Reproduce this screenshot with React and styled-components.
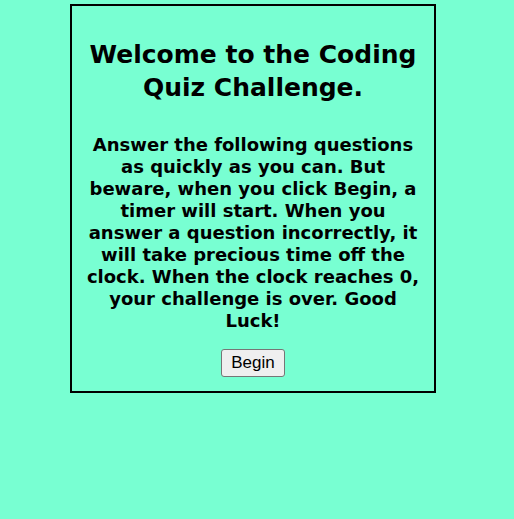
import React from "react";
import styled, { createGlobalStyle } from "styled-components";

const GlobalStyle = createGlobalStyle`
  html, body {
    margin: 0;
    padding: 0;
    background: #78ffd2;
  }
  body {
    font-family: "DejaVu Sans", Verdana, sans-serif;
    color: #000;
  }
`;

const Page = styled.div`
  padding: 4px 0 0 70px;
`;

const QuizBox = styled.section`
  box-sizing: border-box;
  width: 366px;
  border: 2px solid #000;
  padding: 32px 6px 14px;
  text-align: center;
`;

const Title = styled.h1`
  font-size: 25px;
  line-height: 33px;
  font-weight: bold;
  margin: 0 0 30px;
`;

const Intro = styled.p`
  font-size: 18px;
  line-height: 22px;
  font-weight: bold;
  margin: 0 0 17px;
`;

const BeginButton = styled.button`
  font-family: "Liberation Sans", Arial, sans-serif;
  font-size: 17px;
  height: 28px;
  padding: 0 9px;
  background: #efefef;
  color: #000;
  border: 1px solid #767676;
  border-radius: 3px;
`;

export default function App() {
  return (
    <>
      <GlobalStyle />
      <Page>
        <QuizBox>
          <Title>
            Welcome to the Coding
            <br />
            Quiz Challenge.
          </Title>
          <Intro>
            Answer the following questions
            <br />
            as quickly as you can. But
            <br />
            beware, when you click Begin, a
            <br />
            timer will start. When you
            <br />
            answer a question incorrectly, it
            <br />
            will take precious time off the
            <br />
            clock. When the clock reaches 0,
            <br />
            your challenge is over. Good
            <br />
            Luck!
          </Intro>
          <BeginButton>Begin</BeginButton>
        </QuizBox>
      </Page>
    </>
  );
}
